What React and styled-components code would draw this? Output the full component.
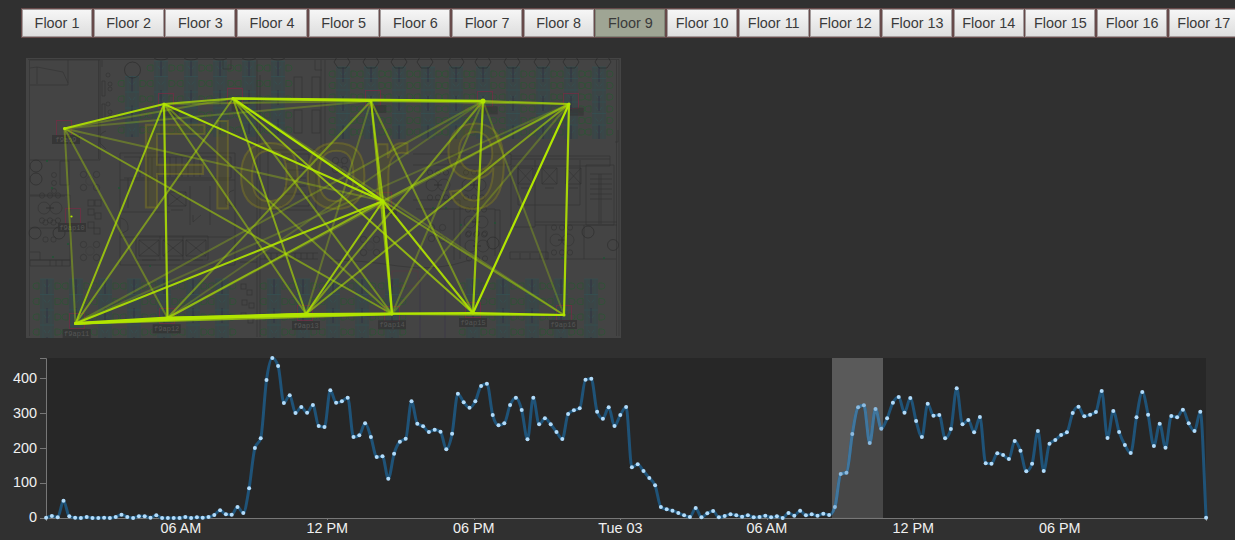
import React from 'react';
import styled, { createGlobalStyle } from 'styled-components';

const GlobalStyle = createGlobalStyle`
  html, body { margin: 0; padding: 0; background: #303030; }
  body { font-family: "Liberation Sans", Arial, sans-serif; font-size: 14.4px; overflow: hidden; }
`;

const Page = styled.main`
  display: flex;
  flex-direction: column;
  width: 1235px;
  height: 540px;
  overflow: hidden;
  background: #303030;
`;

const FloorBar = styled.nav`
  display: flex;
  height: 28px;
  padding: 9px 0 0 22px;
  flex: none;
`;

const FloorSlot = styled.div`
  flex: 0 0 71.68px;
  display: flex;
`;

const FloorButton = styled.button`
  width: 70px;
  height: 28px;
  box-sizing: border-box;
  padding: 0;
  border: 1px solid ${(p) => (p.$active ? '#7f8577' : '#a39c9c')};
  box-shadow: 0 0 0 1px #674a4a;
  background: ${(p) => (p.$active ? '#9fa594' : 'linear-gradient(#f6f6f6, #dedede)')};
  color: #3a3a3a;
  font: 14.4px "Liberation Sans", Arial, sans-serif;
  line-height: 26px;
  text-align: center;
  white-space: nowrap;
`;

const PlanPanel = styled.section`
  width: 595px;
  height: 280px;
  margin: 21px 0 0 26px;
  background: #444444;
  flex: none;
  overflow: hidden;
`;

const PlanSvg = styled.svg`
  display: block;
`;

const ChartPanel = styled.section`
  height: 202px;
  flex: none;
`;

const ChartSvg = styled.svg`
  display: block;
  text { font-family: "Liberation Sans", Arial, sans-serif; font-size: 14.4px; fill: #f0f0f0; }
`;

const floors = Array.from({ length: 17 }, (_, i) => i + 1);

/* ---------- floor plan ---------- */

const P = {
  A: [64.5, 128.5], B: [164, 104], C: [233, 98.5], D: [371, 101], E: [483, 101], F: [569, 104],
  G: [383, 201], H: [75.5, 323.5], I: [167.5, 318], J: [306, 314], K: [392, 314], L: [473, 313], M: [564, 315],
};

// [from, to, opacity, width]
const links = [
  ['A', 'H', 0.35, 2], ['A', 'I', 0.35, 2], ['A', 'G', 0.3, 2], ['A', 'K', 0.5, 2],
  ['A', 'C', 0.3, 2], ['A', 'D', 0.25, 2], ['A', 'B', 0.9, 2], ['B', 'C', 0.7, 2],
  ['B', 'D', 0.3, 2], ['B', 'H', 0.75, 2], ['B', 'I', 0.85, 2.2], ['B', 'G', 0.95, 2],
  ['B', 'J', 0.45, 2], ['B', 'K', 0.4, 2], ['C', 'H', 0.5, 2], ['C', 'J', 0.6, 2],
  ['C', 'K', 0.45, 2], ['C', 'G', 1, 2.2], ['C', 'L', 0.7, 2], ['C', 'M', 0.25, 2],
  ['D', 'I', 0.45, 2], ['D', 'J', 0.28, 2], ['D', 'G', 0.7, 2], ['D', 'K', 0.6, 2],
  ['D', 'L', 0.45, 2], ['D', 'F', 0.45, 2], ['E', 'H', 0.27, 2], ['E', 'I', 0.22, 2],
  ['E', 'J', 0.5, 2], ['E', 'K', 0.3, 2], ['E', 'L', 0.8, 2.2], ['E', 'M', 0.25, 2],
  ['E', 'F', 0.6, 2], ['F', 'G', 0.5, 2], ['F', 'H', 0.22, 2], ['F', 'I', 0.22, 2],
  ['F', 'J', 0.55, 2], ['F', 'K', 0.25, 2], ['F', 'L', 1, 2.2], ['F', 'M', 0.9, 2.2],
  ['G', 'H', 0.9, 2], ['G', 'I', 0.65, 2], ['G', 'J', 0.8, 2], ['G', 'K', 0.95, 2.4],
  ['G', 'L', 0.9, 2.1], ['G', 'M', 0.45, 2], ['C', 'E', 0.95, 2.6], ['C', 'D', 0.9, 2.2],
  ['H', 'I', 1, 2.8], ['H', 'J', 1, 2.5], ['H', 'K', 0.7, 2.5], ['I', 'J', 1, 2.4],
  ['I', 'K', 1, 2.6], ['J', 'L', 1, 2.2], ['K', 'M', 0.8, 2], ['L', 'M', 1, 2.2],
];

const apMarks = [
  [56, 120, 'f9ap9', 52, 135], [157.7, 93.3], [226.7, 88.3], [365.3, 90], [476.7, 91.3], [562.7, 92.7], [376, 192],
  [64.7, 207.7, 'f9ap10', 58, 223], [68.7, 313.3, 'f9ap11', 62.7, 329], [159, 308.3, 'f9ap12', 152.7, 324.3],
  [297, 305.3, 'f9ap13', 292, 321], [384, 306, 'f9ap14', 378, 320.3], [465, 302, 'f9ap15', 459, 318],
  [555.7, 305, 'f9ap16', 549, 320],
];

const topLeftRows = [68, 83.5, 99, 115, 130];
const topRightRows = [74, 85.5, 97, 109, 120.5, 132];
const bottomRows = [286, 301.5, 317, 332];

const deskColumns = [
  { x: 132, rows: topLeftRows.slice(1) },
  ...[161, 191, 220, 249, 278].map((x) => ({ x, rows: topLeftRows })),
  ...[343, 371, 399, 428, 456, 483, 513, 543, 571, 599].map((x) => ({ x, rows: topRightRows })),
  ...[47, 76, 105, 134, 164, 193, 222, 274, 303, 333, 362, 392, 473, 503, 532, 561, 591].map((x) => ({ x, rows: bottomRows })),
];

function DeskColumn({ x, rows }) {
  const y0 = rows[0] - 7;
  const y1 = rows[rows.length - 1] + 7;
  return (
    <g fill="none">
      <rect x={x - 7} y={y0} width="14" height={y1 - y0} fill="#30494c" fillOpacity="0.4" />
      <path d={`M${x - 4} ${y0}V${y1}M${x + 4} ${y0}V${y1}`} stroke="#305557" strokeOpacity="0.3" />
      <path d={`M${x} ${y0}V${y1}`} stroke="#2c2c42" strokeOpacity="0.7" strokeDasharray="15 14" />
      {rows.map((r) => (
        <g key={r} stroke="#2d5436" strokeOpacity="0.8">
          <path d={`M${x - 8} ${r - 3}h-3a3 3 0 0 0 0 6h3zM${x + 8} ${r - 3}h3a3 3 0 0 1 0 6h-3z`} />
          <path d={`M${x - 7} ${r - 7}h14M${x - 3} ${r - 2}l2 3M${x + 3} ${r - 2}l-2 3`} stroke="#2f5a5c" strokeOpacity="0.4" />
        </g>
      ))}
    </g>
  );
}

function Elevator({ x, y, w = 20, h = 16 }) {
  return <path d={`M${x} ${y}h${w}v${h}h${-w}zl${w} ${h}M${x + w} ${y}l${-w} ${h}M${x + 3} ${y + h + 4}h${w - 6}`} />;
}

function RoundTable({ x, y, r = 6 }) {
  return (
    <g>
      <circle cx={x} cy={y} r={r * 0.7} strokeOpacity="0.3" />
      {[[-1, -1], [1, -1], [-1, 1], [1, 1]].map(([a, b]) => (
        <circle key={`${a}${b}`} cx={x + a * (r + 0.5)} cy={y + b * (r + 0.5)} r="3.2" />
      ))}
    </g>
  );
}

function MeetingTable({ x, y }) {
  return (
    <g>
      <circle cx={x - 6} cy={y} r="6" />
      <circle cx={x + 6} cy={y} r="6" />
      <path d={`M${x - 4} ${y}h8`} strokeWidth="1.5" />
      {[-8, 0, 8].map((d) => (
        <g key={d}>
          <rect x={x + d - 2.5} y={y - 15} width="5" height="5" rx="2" />
          <rect x={x + d - 2.5} y={y + 10} width="5" height="5" rx="2" />
        </g>
      ))}
    </g>
  );
}

function Walls() {
  return (
    <g fill="none" stroke="#303030" strokeOpacity="0.65" strokeWidth="0.8">
      <path d="M28 59.500H619V336M29.500 60V336M616.500 60V336M30 60H100V160H30M98.500 60V159M68 60V85H30M30 68L37 67L63 72L68 83M37 67V84" />
      <path d="M102 60V67M102 81h3v15h-3zM102 104h3v15h-3zM106 131q-8 2-6 12l6 6" />
      <path d="M120 265V153H235V265H120M124 157H231V178H124M128 178V208M148 157V208M140 157v20M146 157v20M152 157v20M158 157v20M164 157v20M170 157v20M176 157v20M182 157v20M188 157v20M194 157v20M200 157v20M120 180H235M120 237H235M120 212H170M190 186V225M210 186V225" />
      <Elevator x={139} y={240} /><Elevator x={163} y={240} /><Elevator x={186} y={240} />
      <Elevator x={168} y={192} w={18} h={14} />
      <path d="M136 260V236H208V260zM160 236v24M183 236v24" />
      <path d="M121 218q8 2 7 12l-7 4M234 190q-9 2-8 14l8 3M193 215v7l8-7" />
      <path d="M257 60V337M260 75V337M240 262H257M260 253h58M260 259h58M265 253v6M271 253v6M277 253v6M283 253v6M289 253v6M295 253v6M301 253v6M307 253v6M313 253v6" />
      <rect x="294" y="77" width="8" height="23" /><rect x="312" y="77" width="8" height="23" />
      <rect x="294" y="110" width="8" height="23" /><rect x="312" y="110" width="8" height="23" />
      <path d="M268 150h48v60h-48zM281 154h28v52h-28M284 162h22M284 170h22M284 178h22M284 186h22M284 194h22" />
      <path d="M321 60V150M325 60V150M322 70h-7v-10M223 60v9h8v-9" />
      <path d="M413 154H511V165H413M511 156H610V166H511V227H535V160M511 159H610M518 165V205H580V160M586 165v60M586 165h28v60h-28M590 174h22M590 179h22M590 184h22M590 189h22M590 194h22M590 199h22M599 174v50M601 174v50" />
      <Elevator x={518} y={168} w={15} h={16} /><Elevator x={542} y={168} w={15} h={16} /><Elevator x={566} y={168} w={15} h={16} />
      <path d="M535 222H617M535 225H617M546 225V259H584V225M510 252h38v7h-38zM520 253v6M530 253v6M540 253v6M584 259H616M618 130v12h-3" />
      <path d="M413 200H460V259M416 209H495V256M454 210V260M495 210h5v50M330 260Q360 260 398 266T470 260" />
      <path d="M30 195H70V260H30M30 196H65M30 228H68M30 260h40v6H30zM50 260v6M56 260v6M62 260v6M30 252h10v8M60 161v24h9v-24z" />
      {[[88, 200], [95, 200], [88, 209], [95, 213], [88, 222], [94, 228]].map(([x, y]) => <rect key={`${x}-${y}`} x={x} y={y} width="6" height="6" />)}
      {[[241, 284], [247, 290], [242, 300], [249, 303], [241, 313], [248, 318]].map(([x, y]) => <rect key={`${x}-${y}`} x={x} y={y} width="5" height="5" />)}
      <RoundTable x={90} y={181} /><RoundTable x={90} y={251} />
      <circle cx="36" cy="166" r="6" stroke="#262626" /><circle cx="36" cy="179" r="6" stroke="#262626" />
      <circle cx="35" cy="233" r="6" stroke="#262626" /><circle cx="59" cy="233" r="6" stroke="#262626" />
      <MeetingTable x={50} y={208} />
      {[43, 51].map((x) => <rect key={x} x={x} y="237" width="5" height="5" rx="2" />)}
      {[43, 51].map((x) => <rect key={x} x={x} y="220" width="5" height="5" rx="2" />)}
      {[[54, 175], [54, 183], [54, 191]].map(([x, y]) => <circle key={y} cx={x} cy={y} r="2.500" />)}
      <RoundTable x={370} y={246} /><RoundTable x={437} y={233} r={5} /><RoundTable x={340} y={165} r={4} />
      <MeetingTable x={438} y={185} /><MeetingTable x={474} y={185} /><MeetingTable x={476} y={222} /><MeetingTable x={477} y={246} />
      <circle cx="493" cy="243" r="6" stroke="#262626" /><circle cx="453" cy="160" r="5" />
      <MeetingTable x={562} y={240} /><circle cx="588" cy="232" r="6" stroke="#262626" /><circle cx="613" cy="245" r="5.500" stroke="#262626" />
      {[342, 371, 399, 425, 456, 483, 512, 542, 571, 603].map((x) => (
        <path key={x} d={`M${x - 8} 62l3-5h10l3 5l-4 6h-8z`} stroke="#222" />
      ))}
      <circle cx="132.500" cy="70" r="8" stroke="#242424" />
      {[161, 191, 220, 249, 278].map((x) => <path key={x} d={`M${x - 7} 58a8 4 0 0 0 14 0`} stroke="#222" />)}
      {[[108, 75], [110, 84], [110, 89], [108, 104], [110, 112], [110, 117]].map(([x, y]) => <circle key={y} cx={x} cy={y} r="2" />)}
    </g>
  );
}

function FloorPlan() {
  return (
    <PlanSvg width="595" height="280" viewBox="26 58 595 280">
      {deskColumns.map((c, i) => <DeskColumn key={i} {...c} />)}
      <Walls />
      <path d="M420 278V338M445 278V338" stroke="#38334a" strokeOpacity="0.6" />
      <path d="M392 271H418V286H392z" fill="none" stroke="#6b3040" strokeOpacity="0.35" />
      {[[47, 161], [52, 188], [119, 188], [53, 257], [150, 266], [68, 244], [433, 208], [446, 208], [461, 225], [495, 223], [562, 258], [604, 258]].map(([x, y]) => (
        <circle key={`${x}-${y}`} cx={x} cy={y} r="1" fill="#1f5434" />
      ))}
      {apMarks.map(([x, y, label, lx, ly]) => (
        <g key={`${x}-${y}`}>
          <rect x={Math.round(x) + 0.5} y={Math.round(y) + 0.5} width="15" height="15" fill="none" stroke="#742c44" strokeOpacity="0.75" />
          {label
            ? <>
                <rect x={lx} y={ly} width="28" height="9" fill="#343434" fillOpacity="0.85" />
                <text x={lx + 14} y={ly + 7} textAnchor="middle" fontFamily="Liberation Mono, monospace" fontSize="7" fill="#555">{label}</text>
              </>
            : <rect x={x + 5} y={y + 15} width="16" height="8" fill="#343434" fillOpacity="0.6" />}
        </g>
      ))}
      <text x="136" y="208" fontFamily="Liberation Sans, Arial, sans-serif" fontSize="120" fill="#6f6a10" fillOpacity="0.2" stroke="#8f861c" strokeOpacity="0.38" strokeWidth="2">Floor 9</text>
      <g stroke="#b2e600" strokeLinecap="round">
        {links.map(([a, b, o, w]) => (
          <line key={a + b} x1={P[a][0]} y1={P[a][1]} x2={P[b][0]} y2={P[b][1]} strokeOpacity={o} strokeWidth={w} />
        ))}
      </g>
      <g fill="#b2e600">
        {Object.entries(P).map(([k, [x, y]]) => <circle key={k} cx={x} cy={y} r={k === 'E' ? 2.5 : 1.5} />)}
        <circle cx="71.500" cy="216.500" r="1.100" />
      </g>
    </PlanSvg>
  );
}

/* ---------- timeline ---------- */

// Sample heights in thirds of a pixel.
const samples = [
  518, 513, 517, 467, 514, 518, 519, 516, 519, 519, 518, 519, 516, 509, 516, 519, 514, 514, 518, 511,
  519, 519, 519, 519, 516, 519, 517, 518, 516, 510, 496, 508, 509, 486, 504, 430, 309, 280, 105, 39,
  63, 174, 151, 204, 186, 203, 180, 243, 246, 136, 173, 169, 158, 276, 271, 235, 276, 336, 334, 401,
  326, 290, 281, 169, 236, 244, 261, 254, 260, 313, 266, 146, 172, 188, 169, 123, 116, 210, 241, 235,
  180, 158, 195, 283, 158, 238, 220, 238, 261, 282, 207, 196, 190, 104, 101, 200, 221, 187, 243, 210,
  186, 367, 358, 378, 399, 421, 486, 493, 497, 504, 511, 516, 489, 517, 505, 498, 517, 513, 508, 511,
  515, 511, 517, 516, 512, 517, 514, 519, 504, 512, 497, 511, 508, 512, 506, 510, 486, 387, 383, 267,
  187, 181, 294, 192, 251, 220, 173, 156, 203, 159, 228, 276, 176, 212, 210, 280, 252, 130, 238, 225,
  262, 216, 355, 356, 325, 330, 342, 288, 317, 379, 356, 258, 378, 296, 285, 270, 262, 204, 185, 214,
  209, 201, 138, 279, 198, 261, 300, 324, 217, 141, 209, 303, 236, 308, 213, 217, 194, 235, 258, 200,
  518,
];

const STEP = 5.8;
const points = samples.map((v, i) => [46.1 + i * STEP, 345 + v / 3]);

function monotonePath(pts) {
  const n = pts.length;
  const slope = [];
  for (let i = 0; i < n - 1; i++) slope.push((pts[i + 1][1] - pts[i][1]) / (pts[i + 1][0] - pts[i][0]));
  const tan = pts.map((_, i) => {
    if (i === 0) return slope[0];
    if (i === n - 1) return slope[n - 2];
    const a = slope[i - 1];
    const b = slope[i];
    if (a * b <= 0) return 0;
    return Math.sign(a) * Math.min(Math.abs(a), Math.abs(b), Math.abs(a + b) / 4) * 2;
  });
  let d = `M${pts[0][0]},${pts[0][1]}`;
  for (let i = 0; i < n - 1; i++) {
    const h = (pts[i + 1][0] - pts[i][0]) / 3;
    d += `C${pts[i][0] + h},${pts[i][1] + tan[i] * h} ${pts[i + 1][0] - h},${pts[i + 1][1] - tan[i + 1] * h} ${pts[i + 1][0]},${pts[i + 1][1]}`;
  }
  return d;
}

const curve = monotonePath(points);
const timeLabels = ['06 AM', '12 PM', '06 PM', 'Tue 03', '06 AM', '12 PM', '06 PM'];
const BRUSH = { x: 832, w: 51 };

function Timeline() {
  return (
    <ChartSvg width="1235" height="202" viewBox="0 338 1235 202">
      <defs>
        <clipPath id="brush"><rect x={BRUSH.x} y="350" width={BRUSH.w} height="175" /></clipPath>
      </defs>
      <rect x="46" y="358" width="1160" height="160" fill="#272727" />
      <rect x={BRUSH.x} y="358" width={BRUSH.w} height="160" fill="#5a5a5a" />
      <path d={`${curve}L46.200,518Z`} fill="#282828" fillOpacity="0.36" />
      <path d="M40 358.500H46.500V518.500H40M40 378.500h6M40 413.500h6M40 448.500h6M40 483.500h6" fill="none" stroke="#777" />
      <path d="M46.500 521V518.500H1206.500V521" fill="none" stroke="#777" />
      {timeLabels.map((t, i) => (
        <g key={i}>
          <path d={`M${Math.round(180.8 + i * 146.5) + 0.5} 518v2`} stroke="#777" />
          <text x={180.8 + i * 146.5} y="533" textAnchor="middle">{t}</text>
        </g>
      ))}
      {[400, 300, 200, 100, 0].map((v, i) => (
        <text key={v} x="37" y={383 + i * 34.8} textAnchor="end">{v}</text>
      ))}
      <path d={curve} fill="none" stroke="#1f5378" strokeWidth="3" />
      <path d={curve} fill="none" stroke="#41769d" strokeWidth="3" clipPath="url(#brush)" />
      {points.map(([x, y], i) => (
        <circle key={i} cx={x} cy={y} r="2" fill={x > BRUSH.x && x < BRUSH.x + BRUSH.w ? '#8dbbe0' : '#b2dcfb'} />
      ))}
    </ChartSvg>
  );
}

export default function App() {
  return (
    <>
      <GlobalStyle />
      <Page>
        <FloorBar>
          {floors.map((n) => (
            <FloorSlot key={n}>
              <FloorButton $active={n === 9}>Floor {n}</FloorButton>
            </FloorSlot>
          ))}
        </FloorBar>
        <PlanPanel><FloorPlan /></PlanPanel>
        <ChartPanel><Timeline /></ChartPanel>
      </Page>
    </>
  );
}
